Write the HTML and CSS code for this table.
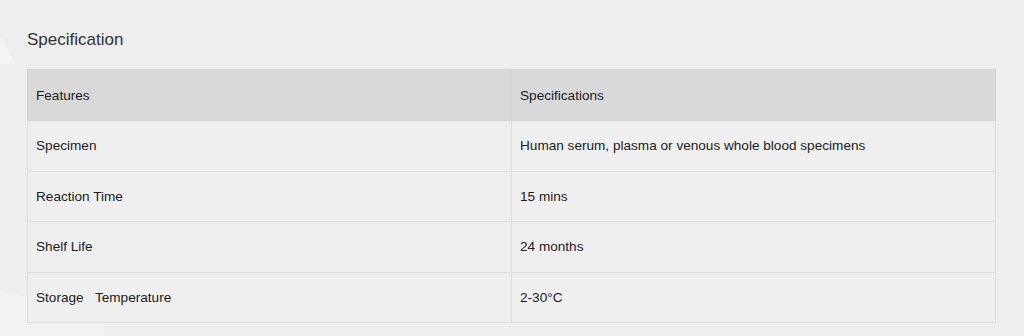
FILE: index.html
```html
<!DOCTYPE html>
<html lang="en">
<head>
<meta charset="utf-8">
<title>Specification</title>
<link rel="stylesheet" href="styles.css">
</head>
<body>
<svg class="backdrop" width="1024" height="336" viewBox="0 0 1024 336" aria-hidden="true">
  <polygon points="0,36 0,64 16,64" fill="#f4f4f4"/>
  <polygon points="0,292 104,310 104,336 0,336" fill="#f2f2f2"/>
</svg>
<section class="spec">
  <h2 class="spec-title">Specification</h2>
  <table class="spec-table">
    <thead>
      <tr><th>Features</th><th>Specifications</th></tr>
    </thead>
    <tbody>
      <tr><td>Specimen</td><td>Human serum, plasma or venous whole blood specimens</td></tr>
      <tr><td>Reaction Time</td><td>15 mins</td></tr>
      <tr><td>Shelf Life</td><td>24 months</td></tr>
      <tr><td>Storage&nbsp;&nbsp;&nbsp;Temperature</td><td>2-30°C</td></tr>
    </tbody>
  </table>
</section>
</body>
</html>
```

FILE: styles.css
```css
html, body {
  margin: 0;
  padding: 0;
  background: #eeeeee;
  font-family: "Liberation Sans", Arial, sans-serif;
}

.backdrop {
  position: absolute;
  left: 0;
  top: 0;
  z-index: 0;
}

.spec {
  position: relative;
  z-index: 1;
  padding: 30px 28px 0 27px;
}

.spec-title {
  margin: 0 0 19px;
  font-size: 17px;
  line-height: 20px;
  font-weight: normal;
  color: #333333;
}

.spec-table {
  width: 969px;
  border-collapse: collapse;
  table-layout: fixed;
  font-size: 13.6px;
  color: #1c1c1c;
}

.spec-table th,
.spec-table td {
  width: 50%;
  height: 50px;
  padding: 0 8px;
  border: 1px solid #dcdcdc;
  text-align: left;
  font-weight: normal;
  vertical-align: middle;
}

.spec-table thead th {
  background: #d9d9d9;
  border-color: #d2d2d2;
}

.spec-table tbody td {
  background: #efefef;
  height: 49.5px;
}
```
